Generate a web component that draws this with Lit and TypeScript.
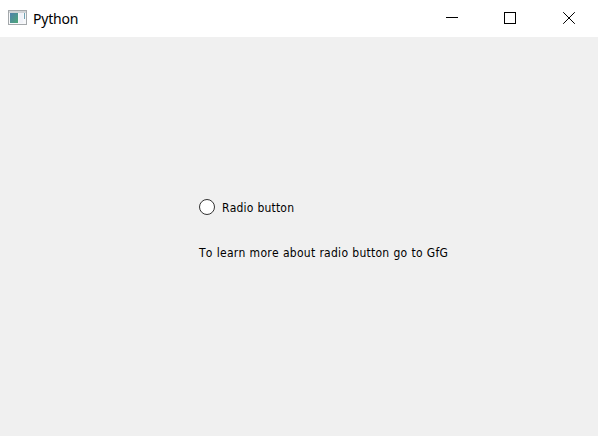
import { LitElement, html, css } from "lit";
import { customElement } from "lit/decorators.js";

@customElement("title-bar")
class TitleBar extends LitElement {
  static styles = css`
    :host { display: flex; height: 37px; background: #fff; color: #000; }
    .icon { width: 19px; height: 15px; margin: 10px 6px 0 8px; flex: none; }
    .title { flex: 1; font: 14px/20px "Noto Sans", sans-serif; letter-spacing: -0.22px; padding-top: 9px; }
    .controls { display: flex; flex: none; }
    .control { width: 58.5px; height: 37px; display: flex; justify-content: center; }
    .control svg { width: 14px; height: 14px; margin-top: 11px; }
  `;
  render() {
    return html`
      <svg class="icon" viewBox="0 0 19 15" shape-rendering="crispEdges">
        <defs>
          <linearGradient id="g" x1="0" y1="0" x2="1" y2="1">
            <stop offset="0" stop-color="#4f80ad" />
            <stop offset="1" stop-color="#4da777" />
          </linearGradient>
        </defs>
        <rect width="19" height="15" fill="#a4a8ab" />
        <rect x="1" y="1" width="17" height="2" fill="#d0d3d6" />
        <rect x="1" y="3" width="17" height="11" fill="#f7f8fa" />
        <rect x="2" y="3" width="8" height="10" fill="url(#g)" />
        <rect x="11" y="3" width="4" height="10" fill="#f0f2f8" />
        <rect x="16" y="3" width="1" height="6" fill="#6fa3b4" />
      </svg>
      <div class="title">Python</div>
      <div class="controls">
        <div class="control"><svg viewBox="0 0 14 14"><path d="M1 6.5h12" stroke="#000" fill="none" shape-rendering="crispEdges" /></svg></div>
        <div class="control"><svg viewBox="0 0 14 14"><path d="M1.5 1.5h11v11h-11z" stroke="#000" fill="none" shape-rendering="crispEdges" /></svg></div>
        <div class="control"><svg viewBox="0 0 14 14"><path d="M1.2 1.2l11.6 11.6M12.8 1.2L1.2 12.8" stroke="#000" stroke-width="1" fill="none" /></svg></div>
      </div>`;
  }
}

@customElement("app-root")
class AppRoot extends LitElement {
  static styles = css`
    :host { display: flex; flex-direction: column; width: 598px; height: 436px; background: #f0f0f0; overflow: hidden; }
    .body { display: flex; flex-direction: column; align-items: flex-start; gap: 28px; padding: 161px 0 0 199px;
      font: 12px/18px "DejaVu Sans Condensed", "DejaVu Sans", sans-serif; font-stretch: condensed; font-kerning: none;
      color: #000; white-space: nowrap; }
    .radio { display: flex; align-items: center; gap: 7px; height: 18px; }
    .label { padding-top: 2px; letter-spacing: 0.18px; word-spacing: 0.4px; }
    .note { letter-spacing: 0.27px; word-spacing: 0.3px; }
    .dot { width: 16px; height: 16px; box-sizing: border-box; border: 1px solid #333; border-radius: 50%; background: #fff; }
  `;
  render() {
    return html`
      <title-bar></title-bar>
      <div class="body">
        <div class="radio" role="radio" aria-checked="false"><span class="dot"></span><span class="label">Radio button</span></div>
        <div class="note">To learn more about radio button go to GfG</div>
      </div>`;
  }
}
